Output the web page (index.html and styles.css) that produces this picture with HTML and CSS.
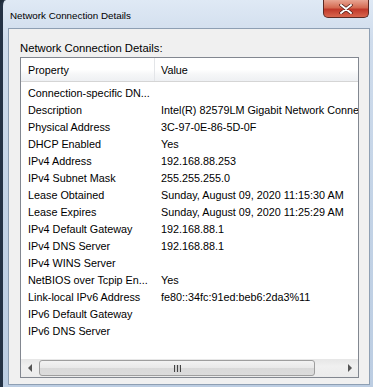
FILE: index.html
```html
<!doctype html>
<html lang="en">
  <head>
    <meta charset="UTF-8" />
    <meta name="viewport" content="width=device-width, initial-scale=1.0" />
    <title>Network Connection Details</title>
    <link rel="stylesheet" href="styles.css">
  </head>
  <body>
    <div class="window">
      <div class="titlebar">
        <span class="title">Network Connection Details</span>
        <div class="close">
          <svg width="14" height="10" viewBox="0 0 14 10">
            <path d="M2 1 L12 9 M12 1 L2 9" stroke="#4a1a14" stroke-width="3.4" stroke-linecap="round" />
            <path d="M2 1 L12 9 M12 1 L2 9" stroke="#fff" stroke-width="2" stroke-linecap="round" />
          </svg>
        </div>
      </div>
      <div class="client">
        <span class="caption">Network Connection Details:</span>
        <div class="listbox">
          <div class="list-header">
            <span class="col-prop">Property</span>
            <span class="col-value">Value</span>
          </div>
          <div class="rows">
            <div class="row"><span class="col-prop">Connection-specific DN...</span><span class="col-value"></span></div>
            <div class="row"><span class="col-prop">Description</span><span class="col-value">Intel(R) 82579LM Gigabit Network Connection</span></div>
            <div class="row"><span class="col-prop">Physical Address</span><span class="col-value">3C-97-0E-86-5D-0F</span></div>
            <div class="row"><span class="col-prop">DHCP Enabled</span><span class="col-value">Yes</span></div>
            <div class="row"><span class="col-prop">IPv4 Address</span><span class="col-value">192.168.88.253</span></div>
            <div class="row"><span class="col-prop">IPv4 Subnet Mask</span><span class="col-value">255.255.255.0</span></div>
            <div class="row"><span class="col-prop">Lease Obtained</span><span class="col-value">Sunday, August 09, 2020 11:15:30 AM</span></div>
            <div class="row"><span class="col-prop">Lease Expires</span><span class="col-value">Sunday, August 09, 2020 11:25:29 AM</span></div>
            <div class="row"><span class="col-prop">IPv4 Default Gateway</span><span class="col-value">192.168.88.1</span></div>
            <div class="row"><span class="col-prop">IPv4 DNS Server</span><span class="col-value">192.168.88.1</span></div>
            <div class="row"><span class="col-prop">IPv4 WINS Server</span><span class="col-value"></span></div>
            <div class="row"><span class="col-prop">NetBIOS over Tcpip En...</span><span class="col-value">Yes</span></div>
            <div class="row"><span class="col-prop">Link-local IPv6 Address</span><span class="col-value">fe80::34fc:91ed:beb6:2da3%11</span></div>
            <div class="row"><span class="col-prop">IPv6 Default Gateway</span><span class="col-value"></span></div>
            <div class="row"><span class="col-prop">IPv6 DNS Server</span><span class="col-value"></span></div>
          </div>
          <div class="hscroll">
            <div class="arrow left"></div>
            <div class="track">
              <div class="thumb"><span class="grip"></span></div>
            </div>
            <div class="arrow right"></div>
          </div>
        </div>
      </div>
    </div>
  </body>
</html>
```

FILE: styles.css
```css
* {
  margin: 0;
  padding: 0;
  box-sizing: border-box;
}
body {
  width: 373px;
  height: 387px;
  overflow: hidden;
  background: #1e2b3a;
  font-family: "Liberation Sans", Arial, sans-serif;
  color: #000;
}
.window {
  width: 373px;
  height: 387px;
  display: flex;
  flex-direction: column;
  border-left: 3px solid #243245;
  border-top-left-radius: 6px;
  background: linear-gradient(to bottom, #dfe9f5 0, #cfdcec 40px, #c3d3e6 200px, #bccde2 100%);
}
.titlebar {
  height: 28px;
  display: flex;
  align-items: flex-start;
  flex-shrink: 0;
}
.title {
  font-size: 9.8px;
  margin: 10px 0 0 7px;
  color: #000;
}
.close {
  margin-left: auto;
  margin-right: 4px;
  width: 46px;
  height: 18px;
  display: flex;
  align-items: center;
  justify-content: center;
  border: 1px solid #5c2a24;
  border-top: none;
  border-radius: 0 0 5px 5px;
  background: linear-gradient(to bottom, #e8a593 0, #d46a52 45%, #c0392a 55%, #d9664e 100%);
}
.client {
  flex: 1;
  margin: 0 3px 2px 5px;
  border: 1px solid #8e9fb3;
  background: #f0f0f0;
  display: flex;
  flex-direction: column;
  padding: 12px 10px 6px 11px;
}
.caption {
  font-size: 11.3px;
  line-height: 14px;
  margin-bottom: 2px;
}
.listbox {
  flex: 1;
  border: 1px solid #828790;
  background: #fff;
  display: flex;
  flex-direction: column;
  font-size: 10.8px;
}
.list-header {
  height: 24px;
  display: flex;
  align-items: center;
  flex-shrink: 0;
  background: linear-gradient(to bottom, #fff 0, #fff 50%, #f6f7f8 70%, #eef0f3 100%);
  border-bottom: 1px solid #d5d5d5;
}
.list-header .col-prop {
  border-right: 1px solid #e3e5e8;
  align-self: stretch;
  display: flex;
  align-items: center;
}
.col-prop {
  width: 134px;
  padding-left: 7px;
  white-space: nowrap;
  overflow: hidden;
}
.col-value {
  padding-left: 6px;
  white-space: nowrap;
  overflow: hidden;
  flex: 1;
}
.rows {
  flex: 1;
  padding-top: 2px;
}
.row {
  height: 17px;
  display: flex;
  align-items: center;
}
.hscroll {
  height: 18px;
  display: flex;
  align-items: center;
  background: linear-gradient(to bottom, #e6e6e6, #f0f0f0 40%, #ebebeb);
}
.arrow {
  width: 17px;
  height: 18px;
  display: flex;
  align-items: center;
  justify-content: center;
}
.arrow::before {
  content: "";
  border-top: 4px solid transparent;
  border-bottom: 4px solid transparent;
}
.arrow.left::before {
  border-right: 4px solid #555;
}
.arrow.right::before {
  border-left: 4px solid #555;
}
.track {
  flex: 1;
  height: 18px;
  padding: 1px 0;
}
.thumb {
  width: 276px;
  height: 16px;
  margin-left: 1px;
  border: 1px solid #9e9e9e;
  border-radius: 3px;
  background: linear-gradient(to bottom, #f3f3f3 0, #e8e8e8 50%, #d9d9d9 51%, #dcdcdc 100%);
  display: flex;
  align-items: center;
  justify-content: center;
}
.grip {
  width: 7px;
  height: 7px;
  background: repeating-linear-gradient(to right, #444 0, #444 1px, #d0d0d0 1px, #d0d0d0 3px);
}
```
